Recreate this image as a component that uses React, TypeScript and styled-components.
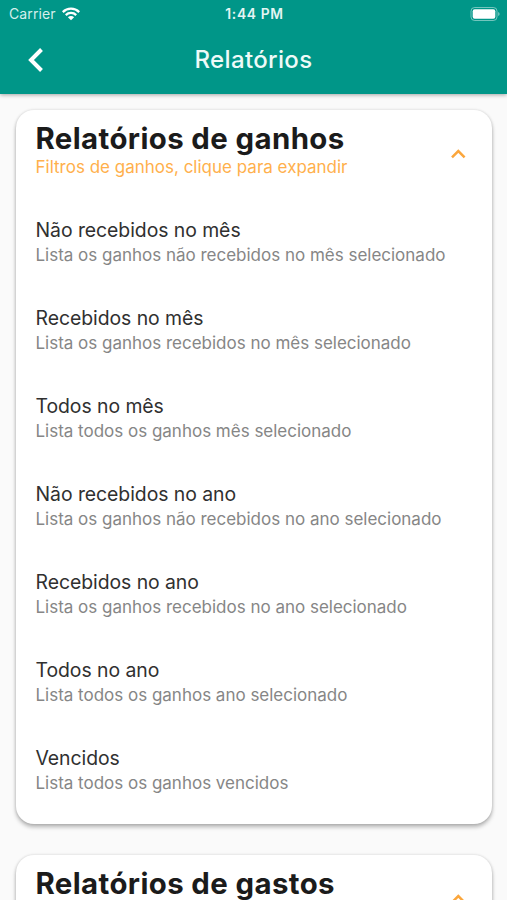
import React from "react";
import styled, { createGlobalStyle } from "styled-components";

const GlobalStyle = createGlobalStyle`
  * { box-sizing: border-box; }
  html, body { margin: 0; height: 100%; overflow: hidden; }
  body { font-family: Inter, "Liberation Sans", sans-serif; background: #fafafa; }
`;

const Screen = styled.div`
  width: 100%;
  height: 900px;
  display: flex;
  flex-direction: column;
  overflow: hidden;
  background: #fafafa;
`;

const Header = styled.header`
  flex: none;
  height: 94px;
  background: #009688;
  color: #fff;
  box-shadow: 0 1px 4px rgba(0, 0, 0, 0.35);
  z-index: 1;
`;

const StatusBar = styled.div`
  height: 26px;
  padding: 1px 7px 0 9px;
  display: grid;
  grid-template-columns: 1fr auto 1fr;
  align-items: center;
  font-size: 14px;
  line-height: 26px;
`;

const Carrier = styled.div`
  display: flex;
  align-items: center;
  gap: 6px;
  color: #d5efec;
  letter-spacing: 0.1px;
`;

const Clock = styled.div`
  font-size: 13.8px;
  font-weight: 600;
  letter-spacing: 0.65px;
  color: #e4f5f3;
`;

const BatterySlot = styled.div`
  display: flex;
  justify-content: flex-end;
`;

const AppBar = styled.div`
  height: 67px;
  padding: 0 20px;
  display: grid;
  grid-template-columns: 32px 1fr 32px;
  align-items: center;
`;

const BackButton = styled.button`
  display: flex;
  justify-content: center;
  padding: 0;
  border: 0;
  background: none;
`;

const PageTitle = styled.h1`
  margin: 0;
  text-align: center;
  font-size: 24px;
  font-weight: 500;
  letter-spacing: 0.35px;
  color: #eefaf8;
`;

const Content = styled.main`
  padding: 16px 15px 0 16px;
  display: flex;
  flex-direction: column;
  gap: 31px;
`;

const Card = styled.section`
  flex: none;
  height: 714px;
  padding: 0 20px 0 19.5px;
  border-radius: 18px;
  background: #fff;
  box-shadow: 0 3px 4px rgba(0, 0, 0, 0.28), 0 0 3px rgba(0, 0, 0, 0.14);
`;

const CardHeader = styled.div`
  height: 88px;
  padding-right: 6px;
  display: flex;
  justify-content: space-between;
`;

const CardHeading = styled.div`
  padding-top: 12px;
`;

const CardTitle = styled.h2`
  margin: 0;
  font-size: 29.4px;
  line-height: 34px;
  font-weight: 700;
  letter-spacing: 0.39px;
  color: #1b1b1b;
`;

const CardHint = styled.div`
  font-size: 17px;
  line-height: 22px;
  color: #ffb04c;
`;

const Item = styled.div`
  height: 88px;
  padding-top: 19px;
`;

const ItemTitle = styled.div`
  font-size: 19.4px;
  line-height: 26px;
  letter-spacing: -0.05px;
  color: #303030;
`;

const ItemText = styled.div`
  font-size: 17px;
  line-height: 24px;
  letter-spacing: -0.01px;
  color: #868686;
`;

const WifiIcon = () => (
  <svg width="18" height="14" viewBox="0 0 18 14" fill="none" stroke="#fff" strokeWidth="2.3">
    <path d="M.8 5.1a11.6 11.6 0 0 1 16.4 0" />
    <path d="M3.8 8.1a7.4 7.4 0 0 1 10.4 0" />
    <path d="M5.9 10.2a4.4 4.4 0 0 1 6.2 0L9 13.3z" fill="#fff" stroke="none" />
  </svg>
);

const BatteryIcon = () => (
  <svg width="30" height="14" viewBox="0 0 30 14">
    <rect x="1" y=".5" width="26" height="13" rx="3.6" fill="none" stroke="#fff" strokeOpacity=".45" />
    <rect x="2.7" y="2.3" width="22.6" height="9.4" rx="2" fill="#fff" />
    <path d="M28.2 5v4q1.4-.6 1.4-2T28.2 5z" fill="#fff" fillOpacity=".5" />
  </svg>
);

const BackIcon = () => (
  <svg width="16" height="24" viewBox="0 0 16 24" fill="none" stroke="#fff" strokeWidth="4">
    <path d="M13.5 1.5 3 12l10.5 10.5" />
  </svg>
);

const Chevron = styled.svg`
  margin-top: 39px;
`;

const ExpandIcon = () => (
  <Chevron width="15" height="10" viewBox="0 0 15 10" fill="none" stroke="#fba63c" strokeWidth="2.5">
    <path d="m1 8.4 6.3-6.3 6.3 6.3" />
  </Chevron>
);

interface Entry {
  title: string;
  text: string;
}

const earnings: Entry[] = [
  { title: "Não recebidos no mês", text: "Lista os ganhos não recebidos no mês selecionado" },
  { title: "Recebidos no mês", text: "Lista os ganhos recebidos no mês selecionado" },
  { title: "Todos no mês", text: "Lista todos os ganhos mês selecionado" },
  { title: "Não recebidos no ano", text: "Lista os ganhos não recebidos no ano selecionado" },
  { title: "Recebidos no ano", text: "Lista os ganhos recebidos no ano selecionado" },
  { title: "Todos no ano", text: "Lista todos os ganhos ano selecionado" },
  { title: "Vencidos", text: "Lista todos os ganhos vencidos" },
];

const ReportCard = ({ title, hint, entries }: { title: string; hint?: string; entries: Entry[] }) => (
  <Card>
    <CardHeader>
      <CardHeading>
        <CardTitle>{title}</CardTitle>
        {hint && <CardHint>{hint}</CardHint>}
      </CardHeading>
      <ExpandIcon />
    </CardHeader>
    {entries.map((entry) => (
      <Item key={entry.title}>
        <ItemTitle>{entry.title}</ItemTitle>
        <ItemText>{entry.text}</ItemText>
      </Item>
    ))}
  </Card>
);

export default function App() {
  return (
    <Screen>
      <GlobalStyle />
      <Header>
        <StatusBar>
          <Carrier>
            Carrier
            <WifiIcon />
          </Carrier>
          <Clock>1:44 PM</Clock>
          <BatterySlot>
            <BatteryIcon />
          </BatterySlot>
        </StatusBar>
        <AppBar>
          <BackButton aria-label="Voltar">
            <BackIcon />
          </BackButton>
          <PageTitle>Relatórios</PageTitle>
        </AppBar>
      </Header>
      <Content>
        <ReportCard
          title="Relatórios de ganhos"
          hint="Filtros de ganhos, clique para expandir"
          entries={earnings}
        />
        <ReportCard title="Relatórios de gastos" entries={[]} />
      </Content>
    </Screen>
  );
}
